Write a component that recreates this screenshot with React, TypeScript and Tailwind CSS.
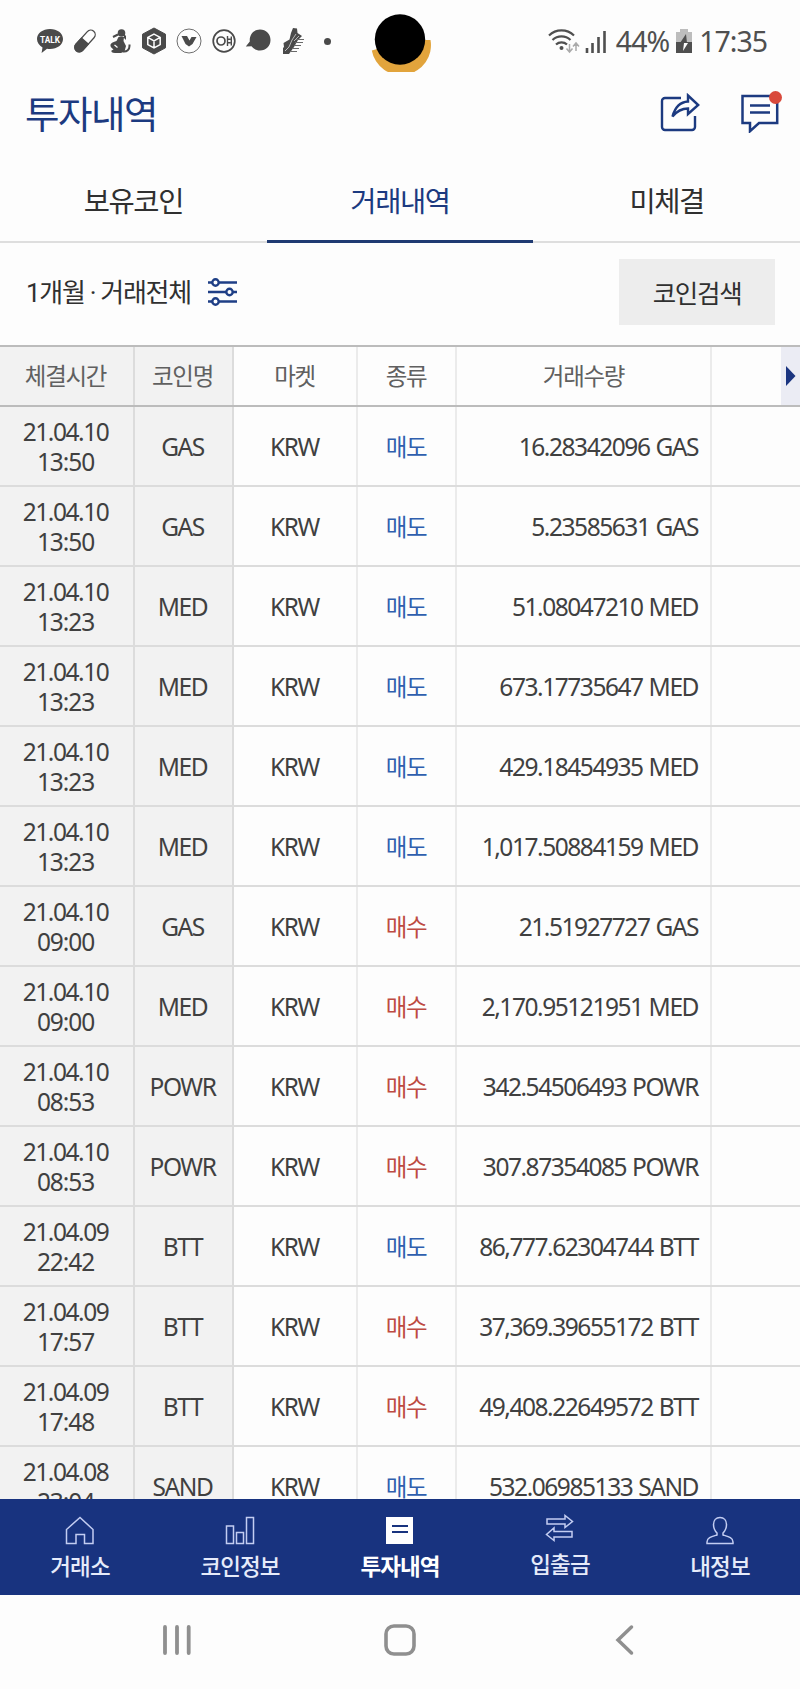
import { ReactNode } from 'react'

type Trade = {
  date: string
  time: string
  coin: string
  side: '매도' | '매수'
  amount: string
}

const trades: Trade[] = [
  { date: '21.04.10', time: '13:50', coin: 'GAS', side: '매도', amount: '16.28342096' },
  { date: '21.04.10', time: '13:50', coin: 'GAS', side: '매도', amount: '5.23585631' },
  { date: '21.04.10', time: '13:23', coin: 'MED', side: '매도', amount: '51.08047210' },
  { date: '21.04.10', time: '13:23', coin: 'MED', side: '매도', amount: '673.17735647' },
  { date: '21.04.10', time: '13:23', coin: 'MED', side: '매도', amount: '429.18454935' },
  { date: '21.04.10', time: '13:23', coin: 'MED', side: '매도', amount: '1,017.50884159' },
  { date: '21.04.10', time: '09:00', coin: 'GAS', side: '매수', amount: '21.51927727' },
  { date: '21.04.10', time: '09:00', coin: 'MED', side: '매수', amount: '2,170.95121951' },
  { date: '21.04.10', time: '08:53', coin: 'POWR', side: '매수', amount: '342.54506493' },
  { date: '21.04.10', time: '08:53', coin: 'POWR', side: '매수', amount: '307.87354085' },
  { date: '21.04.09', time: '22:42', coin: 'BTT', side: '매도', amount: '86,777.62304744' },
  { date: '21.04.09', time: '17:57', coin: 'BTT', side: '매수', amount: '37,369.39655172' },
  { date: '21.04.09', time: '17:48', coin: 'BTT', side: '매수', amount: '49,408.22649572' },
  { date: '21.04.08', time: '23:04', coin: 'SAND', side: '매도', amount: '532.06985133' },
]

const columns = 'grid grid-cols-[135px_99px_124px_99px_255px_1fr]'

function StatusIcons() {
  return (
    <div className="grid grid-cols-[repeat(9,34.7px)] items-center justify-items-center text-[#4a4a4a]">
      <svg width="28" height="28" viewBox="0 0 28 28">
        <path
          d="M14 2C6.800 2 1 6.200 1 12c0 3.600 2.200 6.600 5.500 8.400L5.600 26l5.400-4.300c1 .2 2 .3 3 .3 7.200 0 13-4.200 13-10S21.200 2 14 2z"
          fill="currentColor"
        />
        <text x="14" y="15.500" textAnchor="middle" fontSize="9.500" fontWeight="700" fill="#fff" textLength="20" lengthAdjust="spacingAndGlyphs">
          TALK
        </text>
      </svg>
      <svg width="26" height="26" viewBox="0 0 26 26">
        <g transform="rotate(42 13 13)">
          <rect x="8.500" y="0" width="9" height="26" rx="4.500" fill="none" stroke="currentColor" strokeWidth="1.300" />
          <path d="M7.800 12.500h10.400v9a5.200 5.200 0 0 1-10.400 0z" fill="currentColor" />
        </g>
      </svg>
      <svg width="24" height="26" viewBox="0 0 24 26">
        <g fill="currentColor">
          <circle cx="13.500" cy="5" r="3.800" />
          <path d="M16 6l2 2v4l-2-2zM10.500 9H16l-.5 4 2.500 5-1.500 5.500L13 25H7c-3 0-4-1-3.500-2.500l2-1C3.500 20 2 18.500 2.500 16.500c.5-1.500 3-2.500 6-3.500z" />
        </g>
        <path d="M10 6.500L5 9M15 23.500c4 .5 6.500-2 6.500-5.500v-1.500" fill="none" stroke="currentColor" strokeWidth="2" />
        <path d="M6.500 17l3 2.500" stroke="#fff" strokeWidth="1.200" />
      </svg>
      <svg width="28" height="28" viewBox="0 0 28 28">
        <path d="M14 1l11.500 6.200v13.600L14 27 2.500 20.800V7.200z" fill="currentColor" stroke="currentColor" strokeLinejoin="round" />
        <path d="M14 7.200l6.200 3.200v7.200L14 20.800l-6.200-3.200v-7.200zM7.800 10.400L14 13.800l6.200-3.400M14 13.800v7" fill="none" stroke="#fff" strokeWidth="1.500" />
      </svg>
      <svg width="26" height="26" viewBox="0 0 26 26">
        <circle cx="13" cy="13" r="12" fill="none" stroke="currentColor" strokeWidth=".8" />
        <path d="M5.500 8h5.500l2.500 4.500 2-3.500h5L16.500 16 13 18.500 9.500 16z" fill="currentColor" />
      </svg>
      <svg width="26" height="26" viewBox="0 0 26 26">
        <circle cx="13" cy="13" r="10.800" fill="none" stroke="currentColor" strokeWidth="1.700" />
        <circle cx="10" cy="13" r="4" fill="none" stroke="currentColor" strokeWidth="1.700" />
        <path d="M16.500 8v10M16.500 11.200h3M16.500 14.800h3M20.300 8.500v9" fill="none" stroke="currentColor" strokeWidth="1.400" />
      </svg>
      <svg width="26" height="26" viewBox="0 0 26 26">
        <path d="M15 1.500c6 0 10.500 4.600 10.500 10.500S21 22.500 15 22.500c-3.500 0-6.500-1.500-8.500-4.200L.8 18.500l4-5C4.200 6.500 9 1.500 15 1.500z" fill="currentColor" />
      </svg>
      <svg width="24" height="28" viewBox="0 0 24 28">
        <path d="M12 1l4 .5.5 4.500L21 9l-4 4-4 7-5 7H2v-6l1-1-.5-4 6-3.500L10 6z" fill="currentColor" />
        <path d="M15 7l-4 6-3 7-4 4M18 9l-5 5" fill="none" stroke="#bbb" strokeWidth="1" />
        <path d="M15 12.500h8M14 15.500h8M13 18.500h7M11 21.500h7M10 24.500h6" stroke="#6a6a6a" strokeWidth="1" />
      </svg>
      <span className="size-[7px] rounded-full bg-current" />
    </div>
  )
}

function StatusBar() {
  return (
    <div className="relative flex h-[80px] shrink-0 items-center justify-between pt-[2px] pr-[33px] pl-[33px]">
      <StatusIcons />
      <svg className="absolute top-3 left-[368px]" width="66" height="60" viewBox="0 0 66 60">
        <path d="M3.800 38.500A29.600 29.600 0 0 0 62.500 28H45L20 34z" fill="#e2a43c" />
        <circle cx="32" cy="27.500" r="25.200" fill="#000" />
      </svg>
      <div className="flex items-center font-['Noto_Sans'] text-[28.500px] leading-[40px] tracking-[-1px] text-[#4f4f4f]">
        <svg width="60" height="26" viewBox="0 0 60 26">
          <g fill="none" stroke="currentColor" strokeWidth="2.200">
            <path d="M1 7.500a18 18 0 0 1 25 0M4.500 12a13 13 0 0 1 18 0M8 16.500a8 8 0 0 1 11 0" />
          </g>
          <circle cx="13.500" cy="20" r="2" fill="currentColor" />
          <path d="M21.500 16v8M18.500 20.500l3 3.500 3-3.500M28 23v-8M25 18.500l3-3.500 3 3.500" fill="none" stroke="#aaa" strokeWidth="1.500" />
          <path d="M39 20v5M44.500 15v10M50.500 9v16M56.500 3v22" stroke="currentColor" strokeWidth="2.600" />
        </svg>
        <span className="ml-2">44%</span>
        <svg className="mr-[6px] ml-[6px]" width="18" height="26" viewBox="0 0 18 26">
          <path d="M5 1h8v3h4v10H1V4h4z" fill="#bdbdbd" />
          <path d="M1 14h16v11H1z" fill="currentColor" />
          <path d="M11 6l-6 9h4l-1 0h4z" fill="currentColor" />
          <path d="M9 15h4l-5 8z" fill="#fff" />
        </svg>
        <span>17:35</span>
      </div>
    </div>
  )
}

function Header() {
  return (
    <header className="flex h-[68px] shrink-0 items-center justify-between pr-[19px] pl-[25px] text-[#1c3a80]">
      <h1 className="pt-[2px] text-[37.500px] tracking-[-1.500px]">투자내역</h1>
      <div className="flex gap-[41px] pb-[2px]">
        <svg width="40" height="40" viewBox="0 0 40 40" fill="none" stroke="currentColor" strokeWidth="2.400">
          <path d="M21 5H5a3 3 0 0 0-3 3v26a3 3 0 0 0 3 3h27a3 3 0 0 0 3-3V23" />
          <path d="M28 2.500L38.200 12 28 21v-5.500c-7 0-11 2.500-15.500 8C15 14.500 20 9 28 8.500z" />
        </svg>
        <div className="relative">
          <svg width="40" height="40" viewBox="0 0 40 40" fill="none" stroke="currentColor" strokeWidth="2.500">
            <path d="M1.500 3h34.700v27H18l-9 8.200V30H1.500z" />
            <path d="M9 12.500h20M9 19.500h20" />
          </svg>
          <span className="absolute -top-[2px] left-[28px] size-[13px] rounded-full bg-[#d94a3c]" />
        </div>
      </div>
    </header>
  )
}

function Tabs() {
  return (
    <nav className="grid h-[95px] shrink-0 grid-cols-3 text-center text-[28.500px] tracking-[-1.400px] text-[#303030]">
      <button className="border-b-2 border-[#dedede] pt-[18px]">보유코인</button>
      <button className="border-b-3 border-[#1f3a72] pt-[19px] text-[#1c3a80]">거래내역</button>
      <button className="border-b-2 border-[#dedede] pt-[18px]">미체결</button>
    </nav>
  )
}

function FilterBar() {
  return (
    <div className="flex h-[102px] shrink-0 items-center justify-between pr-[25px] pb-[4px] pl-[26px] text-[26px] tracking-[-1.300px] text-[#303030]">
      <button className="flex items-center gap-[17px]">
        <span className="pt-[3px]">1개월 · 거래전체</span>
        <svg width="30" height="28" viewBox="0 0 30 28" fill="#fff" stroke="#1f3f86" strokeWidth="2.400">
          <path d="M0 4.500h29M0 14h29M0 23.500h29" />
          <circle cx="7.500" cy="4.500" r="3.200" />
          <circle cx="21.500" cy="14" r="3.200" />
          <circle cx="7.500" cy="23.500" r="3.200" />
        </svg>
      </button>
      <button className="h-[66px] w-[156px] bg-[#ededed] pt-[4px] text-[25.500px]">코인검색</button>
    </div>
  )
}

function TradeTable() {
  return (
    <main className="min-h-0 flex-1 overflow-hidden">
      <div className={`${columns} h-[62px] grid-rows-[58px] border-y-2 border-[#bcbcbc] text-center text-[23.500px] leading-[61px] tracking-[-1.300px] text-[#606060]`}>
        <div className="border-r-2 border-[#dcdcdc] bg-[#f2f2f2] pr-[2px]">체결시간</div>
        <div className="border-r-2 border-[#dcdcdc] bg-[#f2f2f2] pr-[2px]">코인명</div>
        <div className="border-r-2 border-[#ebebeb] pr-[1px]">마켓</div>
        <div className="border-r-2 border-[#ebebeb] pr-[1px]">종류</div>
        <div className="border-r-2 border-[#ebebeb]">거래수량</div>
        <div className="flex justify-end">
          <div className="flex w-[19px] items-center bg-[#ebecf4] pl-[5px]">
            <svg width="10" height="20" viewBox="0 0 10 20">
              <path d="M0 0l9.500 10L0 20z" fill="#1b3580" />
            </svg>
          </div>
        </div>
      </div>
      {trades.map((trade, index) => (
        <div
          key={index}
          className={`${columns} h-[80px] grid-rows-[78px] border-b-2 border-[#dcdcdc] text-center font-['Noto_Sans','Noto_Sans_CJK_KR',sans-serif] text-[24.500px] leading-[80px] tracking-[-1.450px] text-[#404040]`}
        >
          <div className="flex flex-col justify-center border-r-2 border-[#dcdcdc] bg-[#f2f2f2] pt-[1px] pr-[2px] leading-[29.500px]">
            <span>{trade.date}</span>
            <span className="tracking-[-1.100px]">{trade.time}</span>
          </div>
          <div className="border-r-2 border-[#dcdcdc] bg-[#f2f2f2] pr-[2px]">{trade.coin}</div>
          <div className="border-r-2 border-[#ebebeb] pr-[1px]">KRW</div>
          <div className={`border-r-2 border-[#ebebeb] pr-[1px] text-[23.500px] ${trade.side === '매도' ? 'text-[#2f5fae]' : 'text-[#bd4b42]'}`}>
            {trade.side}
          </div>
          <div className="border-r-2 border-[#ebebeb] pr-3 text-right [word-spacing:1px]">
            {trade.amount} {trade.coin}
          </div>
          <div />
        </div>
      ))}
    </main>
  )
}

function NavItem({ label, active, raised, children }: { label: string; active?: boolean; raised?: boolean; children: ReactNode }) {
  return (
    <button className={`flex flex-col items-center ${raised ? 'pt-[15px]' : 'pt-[17px]'} ${active ? 'font-bold text-white' : 'font-medium text-[#e6ebfa]'}`}>
      <svg width="30" height="30" viewBox="0 0 30 30" fill="none" stroke="#c3cdf2" strokeWidth="1.500">
        {children}
      </svg>
      <span className="mt-[4px] leading-[34px]">{label}</span>
    </button>
  )
}

function BottomNav() {
  return (
    <nav className="grid h-[96px] shrink-0 grid-cols-5 bg-[#18337f] text-[22.500px] tracking-[-.900px]">
      <NavItem label="거래소">
        <path d="M1.500 27.500V13.500L15 1.500l13 12v14h-8.500v-9h-8.500v9z" />
      </NavItem>
      <NavItem label="코인정보">
        <path d="M1.500 10h7v17.500h-7zM11.500 16.500h7v11h-7zM21.500 1.500h7v26h-7z" />
      </NavItem>
      <NavItem label="투자내역" active>
        <path d="M1 1h27v27H1z" fill="#fff" stroke="none" />
        <path d="M7 10h16M7 16h16" stroke="#18337f" strokeWidth="2" />
      </NavItem>
      <NavItem label="입출금" raised>
        <path d="M2 5h18V1.500l7.500 6-7.500 6V10H2zM27 17.500H9V14l-7.500 6.500L9 26.500V23h18z" />
      </NavItem>
      <NavItem label="내정보">
        <path d="M15 1.500c-4 0-6.500 2.800-6.500 7 0 4 1.500 6.500 3.500 8.500v2c-5 1.500-10 2.500-10 7v1.500h26V26c0-4.500-5-5.500-10-7v-2c2-2 3.500-4.500 3.500-8.500 0-4.200-2.500-7-6.500-7z" />
      </NavItem>
    </nav>
  )
}

function SystemNav() {
  return (
    <div className="flex h-[94px] shrink-0 items-center justify-between px-[160px] pb-[5px] text-[#8f8f8f]">
      <svg width="34" height="32" viewBox="0 0 34 32" stroke="currentColor" strokeWidth="3.800" strokeLinecap="round">
        <path d="M5 3v26M17 3v26M28.700 3v26" />
      </svg>
      <svg width="34" height="34" viewBox="0 0 34 34">
        <rect x="3" y="3" width="28" height="28" rx="8" fill="none" stroke="currentColor" strokeWidth="3.600" />
      </svg>
      <svg width="34" height="34" viewBox="0 0 34 34" fill="none" stroke="currentColor" strokeWidth="3.500" strokeLinecap="round">
        <path d="M25.500 4L12 17l13.500 13" />
      </svg>
    </div>
  )
}

export default function App() {
  return (
    <div className="flex h-[1689px] w-[800px] flex-col overflow-hidden bg-[#fdfdfd] font-[Roboto,'Noto_Sans_CJK_KR',sans-serif]">
      <StatusBar />
      <Header />
      <Tabs />
      <FilterBar />
      <TradeTable />
      <BottomNav />
      <SystemNav />
    </div>
  )
}
